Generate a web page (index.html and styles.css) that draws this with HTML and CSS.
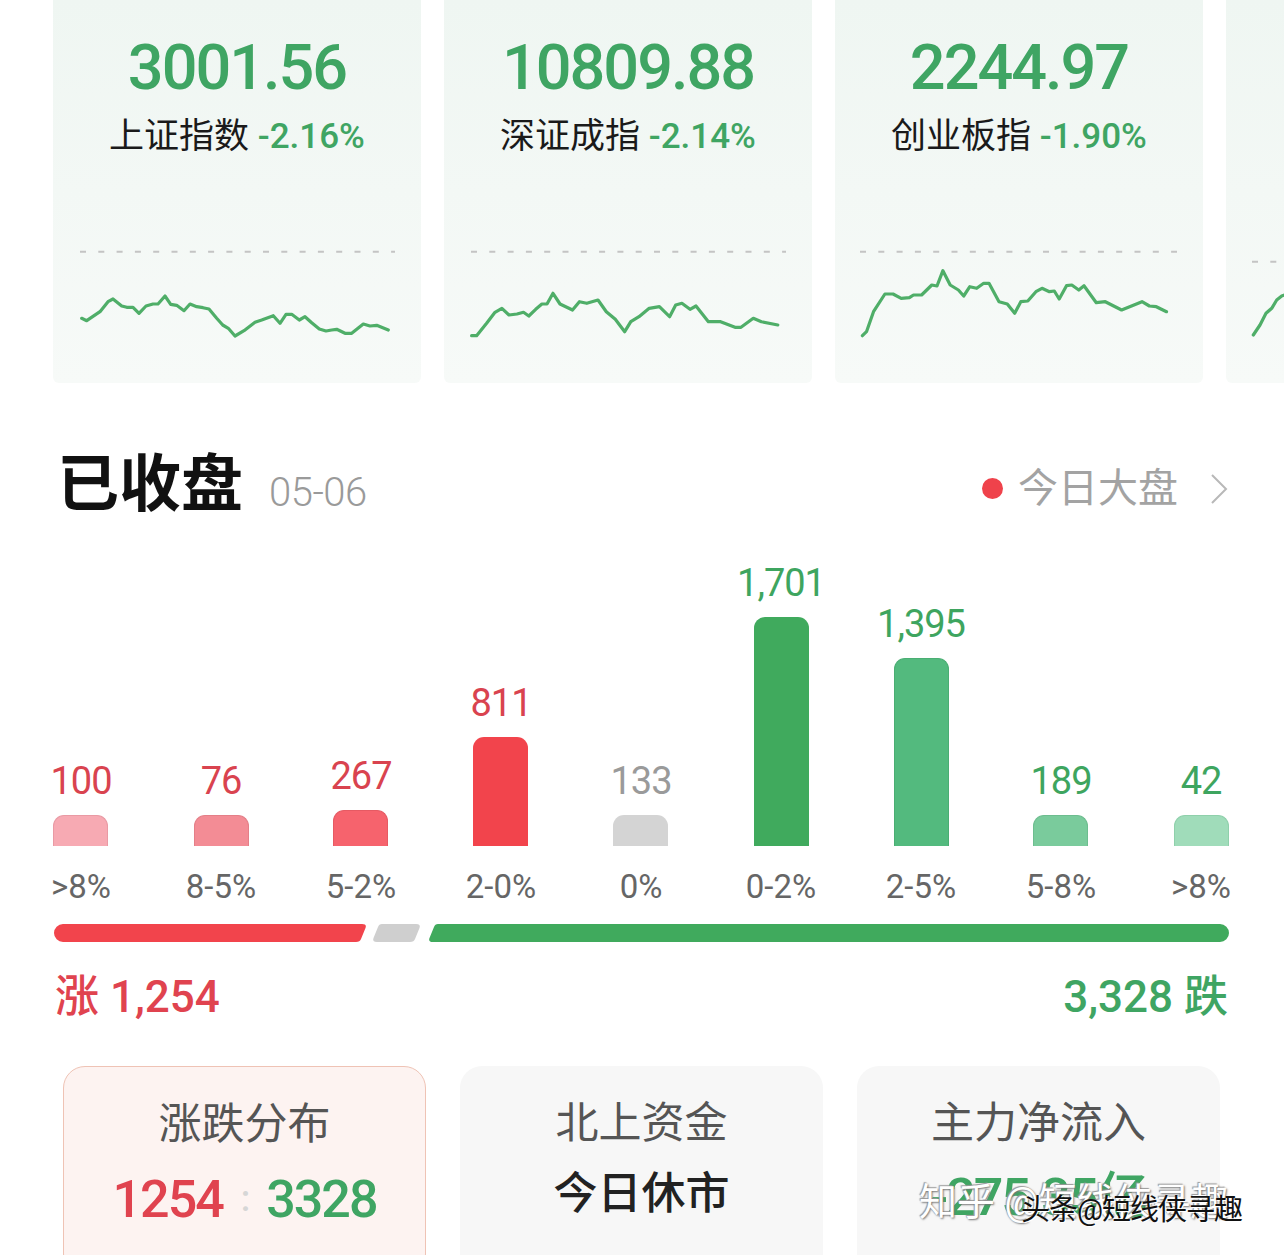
FILE: index.html
```html
<!DOCTYPE html>
<html>
  <head>
    <meta charset="utf-8">
    <title>已收盘 - 大盘概览</title>
    <link rel="stylesheet" href="styles.css">
  </head>
  <body>
    <div id="indices">
      <div class="idx-card">
        <div class="idx-price">3001.56</div>
        <div class="idx-name">上证指数 <span class="down">-2.16%</span></div>
        <svg class="spark" width="368" height="140" viewBox="0 0 368 140">
          <line class="base" x1="27" y1="21.7" x2="342" y2="21.7" />
          <polyline points="28.7,88.3 33.7,90.7 47,81.7 55,71.7 60,69 68.7,76 73.7,77.3 80,77.3 86,83.3 93,76 100,74 105,74 112,66 117.7,74.3 123.7,75.3 131,80.7 137,74 143.7,76.7 150,77.7 156,79 163.7,88.3 169.7,95 175.3,98.3 182,106 191,100.7 202,92.3 208.7,90 220.3,85.7 227,93.3 233,84.3 238.7,84.3 246.3,90 252,86.7 258.7,92.7 266.3,99 273,101 278.7,100 283.7,99.3 292,103.3 298.7,103.3 310.3,94 317,96 323.7,95.3 335.3,100" />
        </svg>
      </div>
      <div class="idx-card">
        <div class="idx-price">10809.88</div>
        <div class="idx-name">深证成指 <span class="down">-2.14%</span></div>
        <svg class="spark" width="368" height="140" viewBox="0 0 368 140">
          <line class="base" x1="27" y1="21.7" x2="342" y2="21.7" />
          <polyline points="27.6,105.7 32.6,105.7 42.8,93 51,82.3 57.9,78.3 65,85 73,84 79.5,82.3 84.8,86 91.7,79.3 97.9,74 103,74 109,63.3 116,74 128.5,80 135.4,71.7 142.8,73.3 154,70 162.3,81.7 171.3,89.3 180.7,101.7 186.8,91.7 195,86.7 205.2,78.3 215.4,76.7 225.6,86.7 231.7,75 237.9,73.3 246,79.3 252,76 264.4,91.7 276.6,91.7 291,97.3 297,97.3 309.3,88.3 317.4,91.7 333.8,95" />
        </svg>
      </div>
      <div class="idx-card">
        <div class="idx-price">2244.97</div>
        <div class="idx-name">创业板指 <span class="down">-1.90%</span></div>
        <svg class="spark" width="368" height="140" viewBox="0 0 368 140">
          <line class="base" x1="25" y1="21.7" x2="342" y2="21.7" />
          <polyline points="27.4,105.7 31.5,101.7 38.5,81.7 49.9,64 58,64 66.2,68.3 74.4,67.7 78.5,65 86.6,65 96.8,55 102,56 107.9,40.7 115.2,55 123.4,60 128.7,66 134.8,56.7 141.7,58.3 148.7,53.3 154,53.3 164,71.7 172.3,74 179.7,83.3 185.8,71.7 192.8,71 200.9,61.7 207,58.3 214.4,61.7 219.3,61 224.2,69 231.5,55.7 236.8,55 243.8,60 249,55.7 261.3,72.7 270.3,71.7 286.6,80 307,71.7 314.4,76 321.3,76.7 331.5,81.7" />
        </svg>
      </div>
      <div class="idx-card">
        <div class="idx-price"></div>
        <div class="idx-name"></div>
        <svg class="spark" width="368" height="140" viewBox="0 0 368 140">
          <line class="base" x1="26" y1="31.7" x2="342" y2="31.7" />
          <polyline points="27.3,105 34,95 40,83.3 45.7,78.3 50.7,70 55.7,66 64,63 72,66 80,60 90,64 100,58" />
        </svg>
      </div>
    </div>

    <div id="section-head">
      <div class="sh-left">
        <span class="sh-title">已收盘</span>
        <span class="sh-date">05-06</span>
      </div>
      <div class="sh-link">
        <span class="dot"></span>今日大盘
        <svg class="chev" width="18" height="32" viewBox="0 0 18 32">
          <polyline points="2,2 16,16 2,30" />
        </svg>
      </div>
    </div>

    <div id="dist">
      <div class="col">
        <div class="col-plot">
          <span class="val up">100</span>
          <div class="bar up-4" style="height: 31px"></div>
        </div>
        <div class="col-label">&gt;8%</div>
      </div>
      <div class="col">
        <div class="col-plot">
          <span class="val up">76</span>
          <div class="bar up-3" style="height: 31px"></div>
        </div>
        <div class="col-label">8-5%</div>
      </div>
      <div class="col">
        <div class="col-plot">
          <span class="val up">267</span>
          <div class="bar up-2" style="height: 36px"></div>
        </div>
        <div class="col-label">5-2%</div>
      </div>
      <div class="col">
        <div class="col-plot">
          <span class="val up">811</span>
          <div class="bar up-1" style="height: 109px"></div>
        </div>
        <div class="col-label">2-0%</div>
      </div>
      <div class="col">
        <div class="col-plot">
          <span class="val flat">133</span>
          <div class="bar flat" style="height: 31px"></div>
        </div>
        <div class="col-label">0%</div>
      </div>
      <div class="col">
        <div class="col-plot">
          <span class="val down">1,701</span>
          <div class="bar down-1" style="height: 229px"></div>
        </div>
        <div class="col-label">0-2%</div>
      </div>
      <div class="col">
        <div class="col-plot">
          <span class="val down">1,395</span>
          <div class="bar down-2" style="height: 188px"></div>
        </div>
        <div class="col-label">2-5%</div>
      </div>
      <div class="col">
        <div class="col-plot">
          <span class="val down">189</span>
          <div class="bar down-3" style="height: 31px"></div>
        </div>
        <div class="col-label">5-8%</div>
      </div>
      <div class="col">
        <div class="col-plot">
          <span class="val down">42</span>
          <div class="bar down-4" style="height: 31px"></div>
        </div>
        <div class="col-label">&gt;8%</div>
      </div>
    </div>

    <svg id="ratio" width="1284" height="20" viewBox="0 0 1284 20">
      <path class="r-up" d="M63,1 L362,1 Q367,1 365.5,5 L361,16 Q360,19 356,19 L63,19 A9,9 0 0 1 63,1 Z" />
      <path class="r-flat" d="M382,1 L416,1 Q421,1 419.5,5 L415,16 Q414,19 410,19 L377,19 Q372,19 373.5,15 L378,4 Q379,1 382,1 Z" />
      <path class="r-down" d="M438,1 L1220,1 A9,9 0 0 1 1220,19 L433,19 Q428,19 429.5,15 L434,4 Q435,1 438,1 Z" />
    </svg>

    <div id="totals">
      <span class="up">涨 1,254</span>
      <span class="down">3,328 跌</span>
    </div>

    <div id="boxes">
      <div class="box box-active">
        <div class="box-title">涨跌分布</div>
        <div class="box-value"><span class="up">1254</span><span class="sep">:</span><span class="down">3328</span></div>
      </div>
      <div class="box">
        <div class="box-title">北上资金</div>
        <div class="box-value plain">今日休市</div>
      </div>
      <div class="box">
        <div class="box-title">主力净流入</div>
        <div class="box-value"><span class="down">-275.35亿</span></div>
        <div class="watermark">
          <span class="wm-a">知乎 @短线侠寻趣</span>
          <span class="wm-b">头条@短线侠寻趣</span>
        </div>
      </div>
    </div>
  </body>
</html>
```

FILE: styles.css
```css
body {
  margin: 0;
  background-color: #fff;
  font-family: Roboto, "Noto Sans CJK SC", sans-serif;
  color: #1a1a1a;
  overflow: hidden;
}
.up {
  color: #e0434f;
}
.down {
  color: #3fa563;
}
.flat {
  color: #9a9a9a;
}

/* index cards */
#indices {
  display: flex;
  gap: 23px;
  padding-left: 53px;
  height: 383px;
  overflow: hidden;
}
.idx-card {
  flex: 0 0 368px;
  display: flex;
  flex-direction: column;
  background: linear-gradient(#eff6f2, #f7faf8);
  border-radius: 0 0 6px 6px;
}
.idx-price {
  padding-top: 33px;
  height: 70px;
  line-height: 70px;
  font-size: 63px;
  font-weight: 500;
  letter-spacing: -2px;
  text-align: center;
  color: #3fa563;
}
.idx-name {
  margin-top: 12px;
  height: 44px;
  line-height: 44px;
  font-size: 35px;
  text-align: center;
}
.idx-name .down {
  font-weight: 500;
}
.spark {
  display: block;
  margin-top: auto;
  margin-bottom: 13px;
}
.spark .base {
  stroke: #c4c4c4;
  stroke-width: 2;
  stroke-dasharray: 6 12.3;
}
.spark polyline {
  fill: none;
  stroke: #4fae68;
  stroke-width: 3.2;
  stroke-linejoin: round;
  stroke-linecap: round;
}

/* section head */
#section-head {
  display: flex;
  justify-content: space-between;
  align-items: center;
  margin-top: 62px;
  height: 80px;
  padding: 0 56px 0 57px;
}
.sh-left {
  display: flex;
  align-items: baseline;
  gap: 26px;
}
.sh-title {
  font-size: 62px;
  line-height: 80px;
  font-weight: 700;
  color: #111;
}
.sh-date {
  font-size: 40px;
  font-weight: 300;
  letter-spacing: -0.5px;
  color: #9a9a9a;
}
.sh-link {
  display: flex;
  align-items: center;
  margin-top: 7px;
  font-size: 40px;
  line-height: 48px;
  color: #a3a3a3;
}
.dot {
  width: 21px;
  height: 21px;
  border-radius: 50%;
  background-color: #ef424b;
  margin-right: 15px;
}
.chev {
  margin-left: 32px;
}
.chev polyline {
  fill: none;
  stroke: #b8b8b8;
  stroke-width: 2;
}

/* distribution */
#dist {
  display: flex;
  padding-left: 11px;
}
.col {
  width: 140px;
  display: flex;
  flex-direction: column;
  align-items: center;
}
.col-plot {
  height: 321px;
  display: flex;
  flex-direction: column;
  justify-content: flex-end;
  align-items: center;
}
.val {
  font-size: 38px;
  line-height: 40px;
  letter-spacing: -1px;
  margin-bottom: 14px;
}
.val.up {
  color: #d9434f;
}
.val.down {
  color: #3ea55f;
}
.bar {
  width: 55px;
  border-radius: 11px 11px 0 0;
  box-sizing: border-box;
}
.bar.up-4 {
  background-color: #f7aab3;
  border: 1.5px solid #e99aa4;
  border-bottom: none;
}
.bar.up-3 {
  background-color: #f38c95;
  border: 1.5px solid #e47f88;
  border-bottom: none;
}
.bar.up-2 {
  background-color: #f6636d;
  border: 1.5px solid #e65a63;
  border-bottom: none;
}
.bar.up-1 {
  background-color: #f2444c;
}
.bar.flat {
  background-color: #d4d4d4;
}
.bar.down-1 {
  background-color: #40aa5d;
}
.bar.down-2 {
  background-color: #53ba7e;
  border: 1.5px solid #4aae73;
  border-bottom: none;
}
.bar.down-3 {
  background-color: #7acb9c;
  border: 1.5px solid #6dbd8f;
  border-bottom: none;
}
.bar.down-4 {
  background-color: #a0dcba;
  border: 1.5px solid #8fd0ab;
  border-bottom: none;
}
.col-label {
  margin-top: 21px;
  font-size: 33px;
  line-height: 40px;
  color: #666;
}

/* ratio bar */
#ratio {
  display: block;
  margin-top: 16px;
}
.r-up {
  fill: #f2444c;
}
.r-flat {
  fill: #cfcfcf;
}
.r-down {
  fill: #40aa5d;
}

#totals {
  display: flex;
  justify-content: space-between;
  margin-top: 26px;
  padding: 0 56px 0 55px;
  font-size: 44px;
  line-height: 56px;
  font-weight: 500;
}

/* bottom boxes */
#boxes {
  display: flex;
  gap: 34px;
  margin-top: 41px;
  padding-left: 63px;
}
.box {
  position: relative;
  width: 363px;
  height: 210px;
  box-sizing: border-box;
  padding-top: 31px;
  background-color: #f7f7f7;
  border-radius: 22px;
  text-align: center;
}
.box-active {
  background-color: #fdf3f1;
  border: 1.5px solid #efc3b5;
}
.box-title {
  font-size: 43px;
  line-height: 52px;
  color: #555;
}
.box-value {
  margin-top: 19px;
  font-size: 52px;
  line-height: 60px;
  font-weight: 500;
  letter-spacing: -2px;
}
.box-value.plain {
  margin-top: 15px;
  font-size: 44px;
  letter-spacing: 0;
  color: #222;
}
.sep {
  margin: 0 18px;
  font-size: 36px;
  color: #d6d6d6;
  vertical-align: 6px;
}
.watermark {
  position: absolute;
  left: 62px;
  top: 106px;
  width: 336px;
  height: 60px;
  line-height: 60px;
  white-space: nowrap;
  text-align: left;
}
.wm-a {
  position: absolute;
  left: 0;
  top: 0;
  font-size: 38px;
  color: #fff;
  text-shadow: 1px 1px 2px #777, -1px -1px 1px #999;
}
.wm-b {
  position: absolute;
  left: 102px;
  top: 8px;
  color: #111;
  font-size: 29px;
  letter-spacing: -1px;
  text-shadow: 1px 1px 0 #fff;
}
```
